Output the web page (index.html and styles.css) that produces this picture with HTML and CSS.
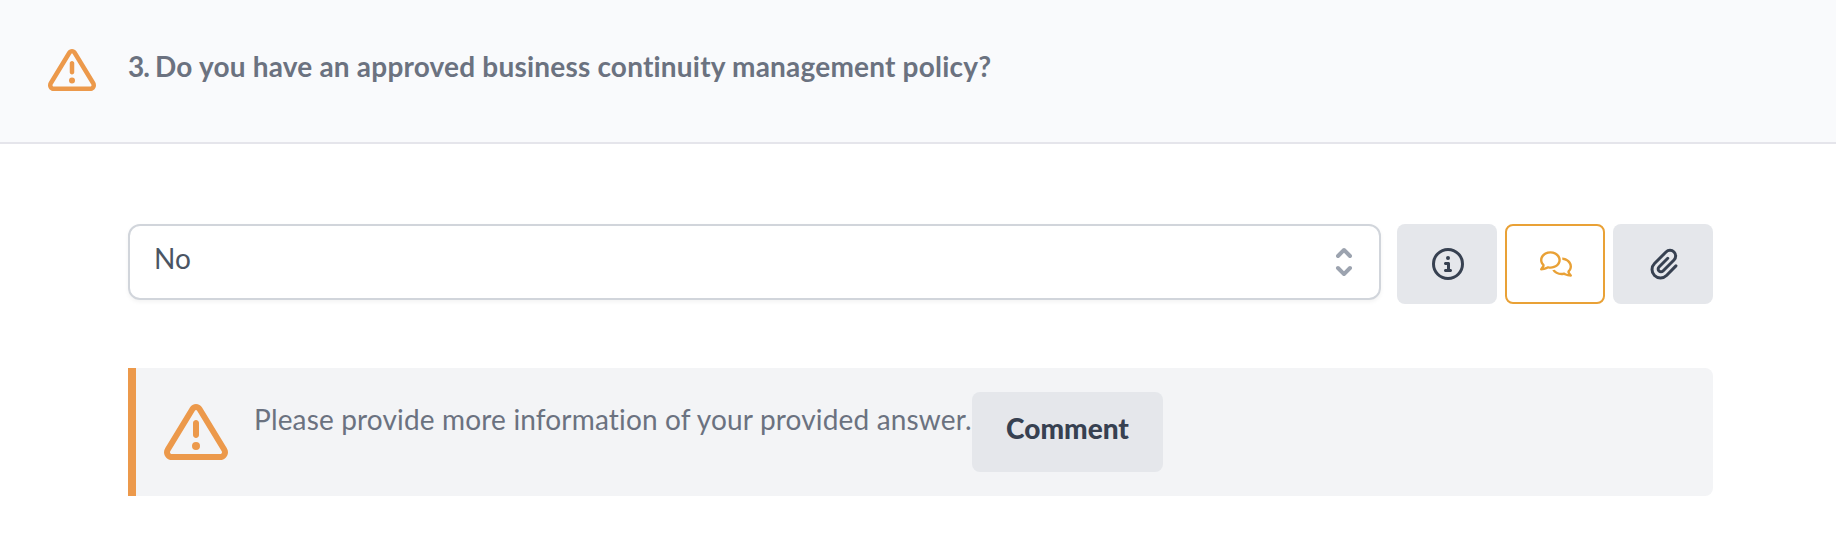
FILE: index.html
```html
<!DOCTYPE html>
<html lang="en">
<head>
<meta charset="utf-8">
<title>Questionnaire</title>
<link rel="stylesheet" href="styles.css">
</head>
<body>
<header class="question">
  <svg class="question-icon" viewBox="0 0 512 512"><path d="M248.400 84.300c1.600-2.700 4.500-4.300 7.600-4.300s6 1.600 7.600 4.300L461.900 410c1.400 2.300 2.100 4.900 2.100 7.500c0 8-6.500 14.500-14.500 14.500H62.500c-8 0-14.500-6.500-14.500-14.500c0-2.700 .7-5.300 2.100-7.500L248.400 84.300zm-41-25L9.100 385c-6 9.800-9.100 21-9.100 32.500C0 452 28 480 62.500 480h387c34.500 0 62.500-28 62.500-62.500c0-11.500-3.200-22.700-9.100-32.500L304.600 59.300C294.300 42.400 275.900 32 256 32s-38.300 10.400-48.600 27.300zM288 368a32 32 0 1 0-64 0 32 32 0 1 0 64 0zm-8-184c0-13.300-10.700-24-24-24s-24 10.700-24 24v96c0 13.300 10.700 24 24 24s24-10.700 24-24V184z"/></svg>
  <h1 class="question-title"><span class="question-number">3. </span>Do you have an approved business continuity management policy?</h1>
</header>
<main class="answer">
  <div class="controls">
    <div class="select">
      <span class="select-value">No</span>
      <svg class="select-arrows" viewBox="0 0 20 20"><path d="M10 3a1 1 0 01.707.293l3 3a1 1 0 01-1.414 1.414L10 5.414 7.707 7.707a1 1 0 01-1.414-1.414l3-3A1 1 0 0110 3zm-3.707 9.293a1 1 0 011.414 0L10 14.586l2.293-2.293a1 1 0 011.414 1.414l-3 3a1 1 0 01-1.414 0l-3-3a1 1 0 010-1.414z"/></svg>
    </div>
    <div class="actions">
      <button class="action" aria-label="Information"><svg class="action-icon" viewBox="0 0 512 512"><path d="M256 48a208 208 0 1 1 0 416 208 208 0 1 1 0-416zm0 464A256 256 0 1 0 256 0a256 256 0 1 0 0 512zM216 336c-13.300 0-24 10.700-24 24s10.700 24 24 24h80c13.300 0 24-10.700 24-24s-10.700-24-24-24h-8V248c0-13.300-10.700-24-24-24H216c-13.300 0-24 10.700-24 24s10.700 24 24 24h24v64H216zm40-144a32 32 0 1 0 0-64 32 32 0 1 0 0 64z"/></svg></button>
      <button class="action action-active" aria-label="Comments"><svg class="action-icon" viewBox="0 0 640 512"><path d="M88.200 309.100c9.800-18.300 6.800-40.800-7.500-55.800C59.400 230.900 48 204 48 176c0-63.500 63.800-128 160-128s160 64.500 160 128s-63.800 128-160 128c-13.100 0-25.800-1.300-37.800-3.600c-10.400-2-21.200-.6-30.700 4.200c-4.100 2.100-8.300 4.100-12.600 6c-16 7.200-32.900 13.500-49.900 18c2.800-4.600 5.400-9.100 7.900-13.600c1.100-1.900 2.200-3.900 3.200-5.900zM0 176c0 41.800 17.200 80.100 45.900 110.300c-.9 1.700-1.900 3.500-2.800 5.100c-10.300 18.400-22.300 36.500-36.600 52.100c-6.600 7-8.300 17.200-4.600 25.900C5.800 378.300 14.400 384 24 384c43 0 86.500-13.300 122.700-29.700c4.800-2.200 9.600-4.500 14.200-6.800c15.100 3 30.900 4.500 47.100 4.500c114.900 0 208-78.800 208-176S322.900 0 208 0S0 78.800 0 176zM432 480c16.200 0 31.900-1.600 47.100-4.500c4.600 2.300 9.400 4.600 14.200 6.800C529.500 498.700 573 512 616 512c9.600 0 18.200-5.700 22-14.500c3.800-8.800 2-19-4.600-25.900c-14.200-15.600-26.200-33.700-36.600-52.100c-.9-1.700-1.900-3.400-2.800-5.100C622.800 384.100 640 345.800 640 304c0-94.400-87.900-171.500-198.200-175.800c4.100 15.200 6.200 31.200 6.200 47.800l0 .6c87.200 6.700 144 67.500 144 127.400c0 28-11.400 54.900-32.700 77.200c-14.300 15-17.300 37.600-7.500 55.800c1.100 2 2.200 4 3.200 5.900c2.500 4.500 5.200 9 7.900 13.600c-17-4.500-33.900-10.700-49.900-18c-4.300-1.900-8.500-3.900-12.600-6c-9.500-4.800-20.300-6.200-30.700-4.200c-12.100 2.400-24.800 3.600-37.800 3.600c-61.700 0-110-26.500-136.800-62.300c-16 5.400-32.800 9.400-50 11.800C279 439.800 350 480 432 480z"/></svg></button>
      <button class="action" aria-label="Attachment"><svg class="action-icon clip-icon" viewBox="0 0 448 512"><path d="M415 286L264 440c-53 53-139 53-192 0s-53-139 0-192L256 64c35.300-35.300 92.700-35.300 128 0s35.300 92.700 0 128L208 368c-17.700 17.700-46.300 17.700-64 0s-17.700-46.300 0-64L284 164"/></svg></button>
    </div>
  </div>
  <section class="notice">
    <svg class="notice-icon" viewBox="0 0 512 512"><path d="M248.400 84.300c1.600-2.700 4.500-4.300 7.600-4.300s6 1.600 7.600 4.300L461.900 410c1.400 2.300 2.100 4.900 2.100 7.500c0 8-6.500 14.500-14.500 14.500H62.500c-8 0-14.500-6.500-14.500-14.500c0-2.700 .7-5.300 2.100-7.500L248.400 84.300zm-41-25L9.100 385c-6 9.800-9.100 21-9.100 32.500C0 452 28 480 62.500 480h387c34.500 0 62.500-28 62.500-62.500c0-11.500-3.200-22.700-9.100-32.500L304.600 59.300C294.300 42.400 275.900 32 256 32s-38.300 10.400-48.600 27.300zM288 368a32 32 0 1 0-64 0 32 32 0 1 0 64 0zm-8-184c0-13.300-10.700-24-24-24s-24 10.700-24 24v96c0 13.300 10.700 24 24 24s24-10.700 24-24V184z"/></svg>
    <p class="notice-text">Please provide more information of your provided answer.</p>
    <button class="comment-button">Comment</button>
  </section>
</main>
</body>
</html>
```

FILE: styles.css
```css
* {
  box-sizing: border-box;
}

body {
  margin: 0;
  background: #fff;
  color: #6b7280;
  font-family: Lato, "Open Sans", sans-serif;
  font-size: 28px;
  line-height: 40px;
}

svg {
  display: block;
  flex: none;
  fill: currentColor;
}

.question {
  display: flex;
  gap: 32px;
  height: 144px;
  padding: 46px 48px 0;
  background: #f9fafc;
  border-bottom: 2px solid #e5e5eb;
}

.question-icon {
  width: 48px;
  height: 48px;
  color: #ec994b;
}

.question-title {
  margin: 0;
  font-size: 28px;
  font-weight: 700;
  white-space: nowrap;
  letter-spacing: 0.2px;
}

.question-number {
  letter-spacing: -0.9px;
}

.answer {
  padding: 80px 123px 0 128px;
}

.controls {
  display: flex;
  align-items: flex-start;
  gap: 16px;
}

.select {
  display: flex;
  flex: 1;
  justify-content: space-between;
  height: 76px;
  padding: 12px 15px 0 24px;
  border: 2px solid #d1d5db;
  border-radius: 12px;
  box-shadow: 0 2px 4px rgba(0, 0, 0, 0.05);
}

.select-value {
  color: #4b5563;
}

.select-arrows {
  width: 40px;
  height: 40px;
  margin-top: 4px;
  color: #9ca3af;
}

.actions {
  display: flex;
  gap: 8px;
}

.action {
  display: flex;
  align-items: center;
  justify-content: center;
  width: 100px;
  height: 80px;
  padding: 0 0 0 2px;
  border: 0;
  border-radius: 8px;
  background: #e5e7eb;
  color: #374151;
}

.action-active {
  border: 2px solid #e9a136;
  background: #fff;
  color: #e9a136;
}

.action-icon {
  width: 32px;
  height: 32px;
}

.clip-icon {
  width: 28px;
  fill: none;
  stroke: currentColor;
  stroke-width: 48;
  stroke-linecap: round;
}

.notice {
  display: flex;
  height: 128px;
  margin-top: 64px;
  padding: 24px 28px;
  border-left: 8px solid #ec994b;
  border-radius: 0 8px 8px 0;
  background: #f3f4f6;
}

.notice-icon {
  width: 64px;
  height: 64px;
  margin-top: 8px;
  color: #ec994b;
}

.notice-text {
  width: 718px;
  margin: 7px 0 0 26px;
  white-space: nowrap;
  letter-spacing: 0.16px;
}

.comment-button {
  width: 191px;
  height: 80px;
  padding: 0 0 8px;
  border: 0;
  border-radius: 8px;
  background: #e5e7eb;
  color: #374151;
  font-family: inherit;
  font-size: 28px;
  font-weight: 900;
  line-height: 40px;
}
```
